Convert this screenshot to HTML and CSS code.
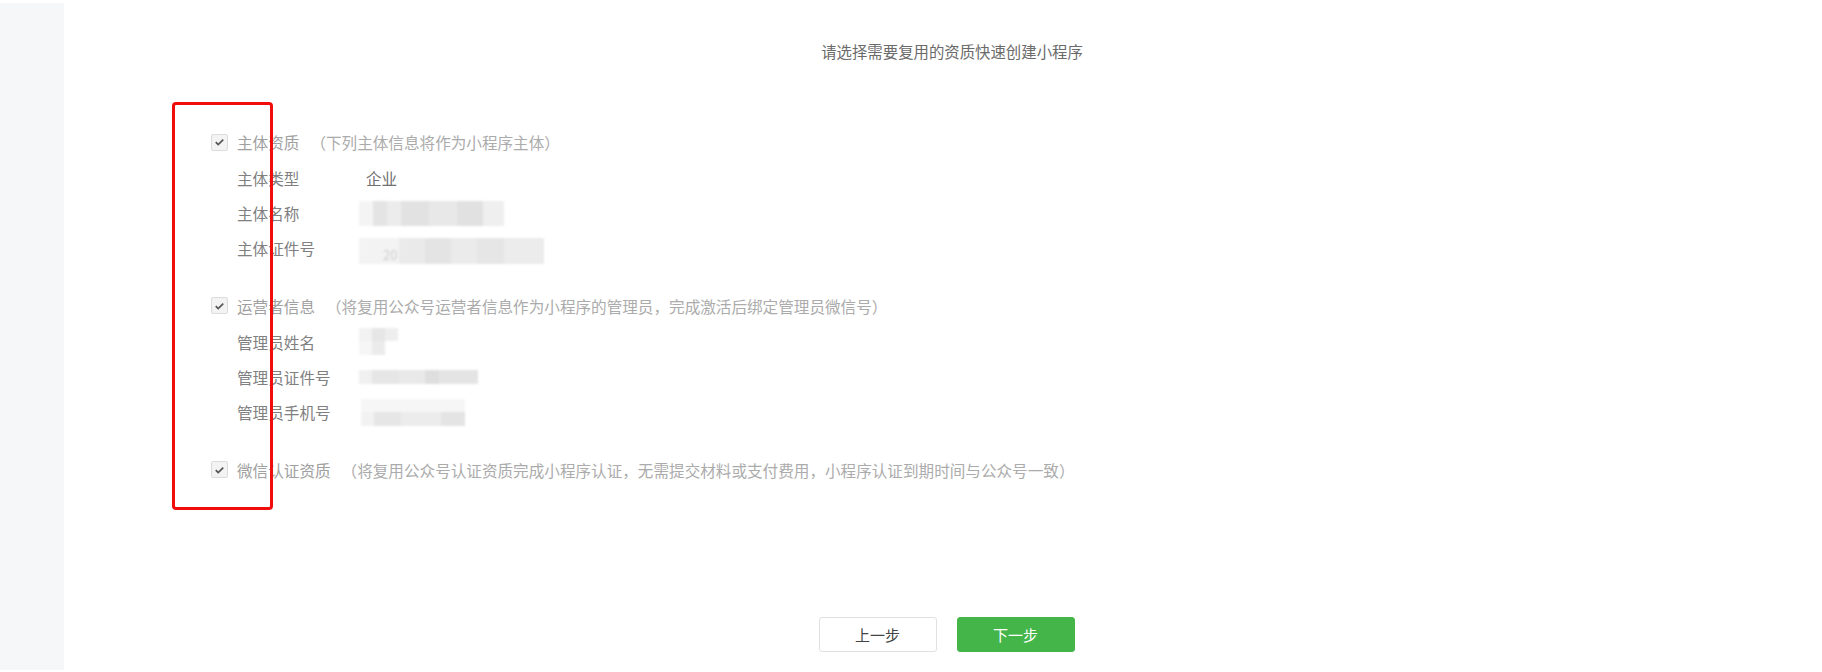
FILE: index.html
```html
<!DOCTYPE html>
<html lang="zh-CN">
<head>
  <meta charset="UTF-8" />
  <meta name="viewport" content="width=device-width, initial-scale=1" />
  <title>复用资质创建小程序</title>
  <link rel="stylesheet" href="styles.css">
</head>
<body>

  <div class="page">
    <div class="sidebar"></div>

    <div class="main">
      <h1 class="page-title">请选择需要复用的资质快速创建小程序</h1>

      <div class="form">
        <div class="section">
          <div class="section-head">
            <span class="check"><svg viewBox="0 0 16 16" width="16" height="16"><path d="M4 8.2l2.6 2.6L12 5.4" fill="none" stroke="#555" stroke-width="1.8"/></svg></span>
            <span class="section-title">主体资质</span>
            <span class="hint">（下列主体信息将作为小程序主体）</span>
          </div>
          <div class="row"><span class="label">主体类型</span><span class="value">企业</span></div>
          <div class="row"><span class="label">主体名称</span><span class="mosaic m-name"></span></div>
          <div class="row"><span class="label">主体证件号</span><span class="mosaic m-code"><i>20</i></span></div>
        </div>

        <div class="section">
          <div class="section-head">
            <span class="check"><svg viewBox="0 0 16 16" width="16" height="16"><path d="M4 8.2l2.6 2.6L12 5.4" fill="none" stroke="#555" stroke-width="1.8"/></svg></span>
            <span class="section-title">运营者信息</span>
            <span class="hint">（将复用公众号运营者信息作为小程序的管理员，完成激活后绑定管理员微信号）</span>
          </div>
          <div class="row"><span class="label">管理员姓名</span><span class="mosaic m-admin"></span></div>
          <div class="row"><span class="label">管理员证件号</span><span class="mosaic m-id"></span></div>
          <div class="row"><span class="label">管理员手机号</span><span class="mosaic m-phone"></span></div>
        </div>

        <div class="section">
          <div class="section-head">
            <span class="check"><svg viewBox="0 0 16 16" width="16" height="16"><path d="M4 8.2l2.6 2.6L12 5.4" fill="none" stroke="#555" stroke-width="1.8"/></svg></span>
            <span class="section-title">微信认证资质</span>
            <span class="hint">（将复用公众号认证资质完成小程序认证，无需提交材料或支付费用，小程序认证到期时间与公众号一致）</span>
          </div>
        </div>
      </div>

      <div class="actions">
        <button class="btn btn-default">上一步</button>
        <button class="btn btn-primary">下一步</button>
      </div>
    </div>

    <!-- 标注框 -->
    <div class="mark"></div>
  </div>

</body>
</html>
```

FILE: styles.css
```css
body {
  margin: 0;
  background-color: #fff;
  font-family: "Noto Sans CJK SC", "Noto Sans", sans-serif;
  color: #666;
}
.page {
  position: relative;
  display: flex;
  width: 1822px;
  height: 672px;
  overflow: hidden;
}
.sidebar {
  width: 64px;
  flex-shrink: 0;
  margin-top: 3px;
  height: 667px;
  background-color: #f6f7f9;
}
.main {
  flex: 1;
  padding-top: 41px;
}
.page-title {
  margin: 0;
  padding-left: 18px;
  font-size: 15.4px;
  font-weight: normal;
  line-height: 20px;
  text-align: center;
  color: #6a6a6a;
}
.form {
  margin-top: 63px;
  padding-left: 147px;
}
.section {
  margin-bottom: 22px;
}
.section:last-child {
  margin-bottom: 0;
}
.section-head {
  display: flex;
  align-items: center;
  height: 36px;
  font-size: 15.6px;
}
.check {
  width: 15px;
  height: 15px;
  border: 1px solid #dcdcdc;
  border-radius: 2px;
  background-color: #f3f3f3;
  display: flex;
  align-items: center;
  justify-content: center;
  margin-right: 9px;
}
.section-title {
  color: #a0a0a0;
}
.hint {
  margin-left: 11px;
  color: #ababab;
}
.row {
  display: flex;
  align-items: center;
  height: 35.3px;
  padding-left: 26px;
  font-size: 15.6px;
}
.label {
  width: 129px;
  color: #808080;
}
.value {
  color: #707070;
}
.mosaic {
  display: block;
  margin-left: -7px;
  filter: blur(1.2px);
  position: relative;
}
.mosaic i {
  position: absolute;
  left: 24px;
  top: 7px;
  font-style: normal;
  font-size: 13px;
  color: #cfcfcf;
}
.m-name {
  width: 145px;
  height: 25px;
  margin-top: 2px;
  background:
    linear-gradient(90deg, #f4f4f4 0 14px, #e4e4e4 14px 28px, #ececec 28px 42px, #e2e2e2 42px 70px, #e8e8e8 70px 98px, #e1e1e1 98px 124px, #efefef 124px 145px);
}
.m-code {
  width: 185px;
  height: 26px;
  margin-top: 6px;
  background:
    linear-gradient(90deg, #f3f3f3 0 40px, #eaeaea 40px 66px, #e4e4e4 66px 92px, #ebebeb 92px 118px, #e6e6e6 118px 145px, #ececec 145px 185px);
}
.m-admin {
  width: 39px;
  height: 27px;
  background:
    linear-gradient(180deg, transparent 0 13px, #fff 13px),
    linear-gradient(90deg, #f2f2f2 0 13px, #e6e6e6 13px 26px, #eeeeee 26px 39px);
  background-color: #f3f3f3;
}
.m-admin::after {
  content: "";
  position: absolute;
  left: 0;
  top: 13px;
  width: 26px;
  height: 14px;
  background: linear-gradient(90deg, #f6f6f6 0 13px, #ebebeb 13px 26px);
}
.m-id {
  width: 119px;
  height: 14px;
  background:
    linear-gradient(90deg, #f0f0f0 0 13px, #e6e6e6 13px 40px, #e9e9e9 40px 66px, #dedede 66px 80px, #e4e4e4 80px 119px);
}
.m-phone {
  width: 104px;
  height: 27px;
  margin-left: -5px;
  background:
    linear-gradient(180deg, #f6f6f6 0 13px, transparent 13px),
    linear-gradient(90deg, #f2f2f2 0 13px, #e6e6e6 13px 40px, #ececec 40px 80px, #e4e4e4 80px 104px);
}
.actions {
  margin-top: 129px;
  padding-left: 7px;
  display: flex;
  justify-content: center;
  gap: 20px;
}
.btn {
  width: 118px;
  height: 35px;
  border-radius: 3px;
  font-family: inherit;
  font-size: 15px;
  cursor: pointer;
}
.btn-default {
  background-color: #fff;
  border: 1px solid #e1e1e1;
  color: #444;
}
.btn-primary {
  background-color: #44b549;
  border: 1px solid #44b549;
  color: #fff;
}
/* 红色标注框 */
.mark {
  position: absolute;
  left: 172px;
  top: 102px;
  width: 95px;
  height: 402px;
  border: 3px solid #f20d0d;
  border-radius: 4px;
}
```
